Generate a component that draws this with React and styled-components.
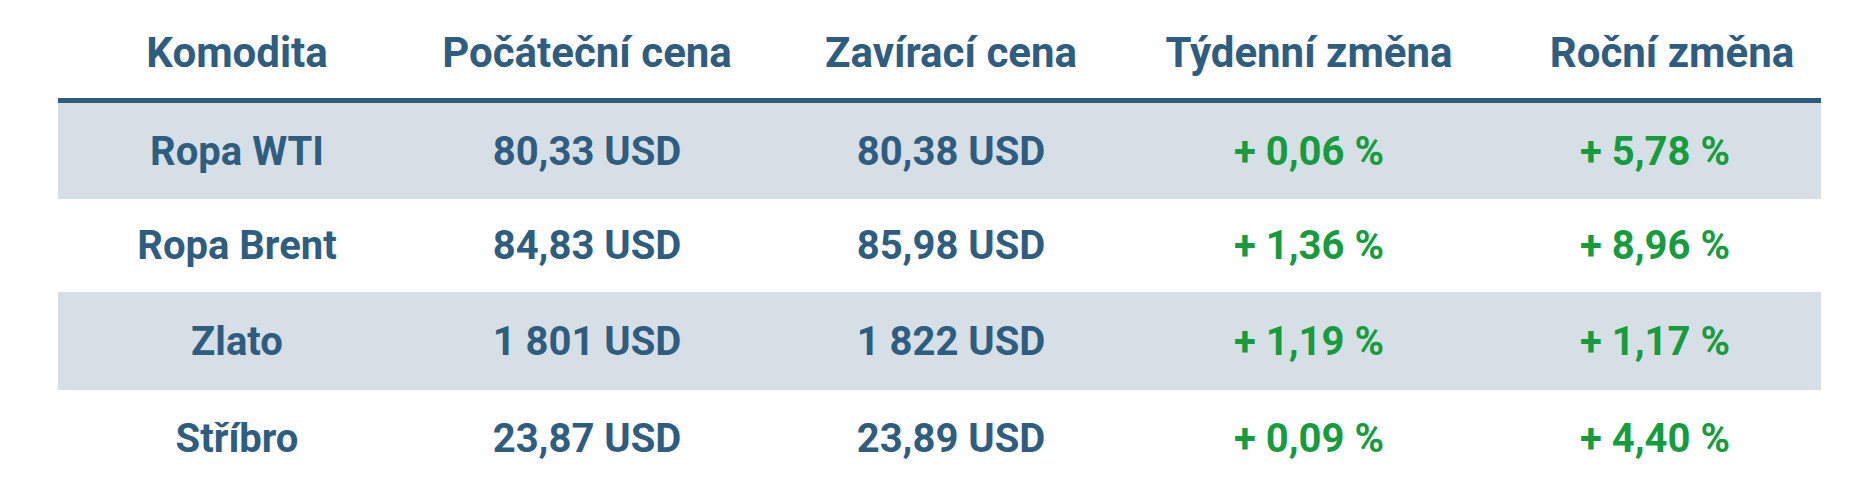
import React from "react";
import styled, { createGlobalStyle } from "styled-components";

const Global = createGlobalStyle`
  html, body { margin: 0; padding: 0; background: #ffffff; }
  body { font-family: Roboto, "Liberation Sans", sans-serif; }
`;

const Page = styled.div`
  padding-left: 58px;
  width: 1763px;
`;

const COLS = "358px 342px 386px 330px 347px";

const HeaderRow = styled.div`
  display: grid;
  grid-template-columns: ${COLS};
  height: 98px;
  border-bottom: 5px solid #2e5c7f;
`;

const HeadCell = styled.div`
  display: flex;
  align-items: flex-end;
  justify-content: center;
  padding-bottom: 21px;
  padding-left: ${(p) => p.$shift || 0}px;
  font-size: 42px;
  font-weight: 700;
  color: #2f5d80;
  white-space: nowrap;
`;

const Row = styled.div`
  display: grid;
  grid-template-columns: ${COLS};
  height: ${(p) => p.$h}px;
  background: ${(p) => (p.$striped ? "#d6dfe6" : "#ffffff")};
`;

const Cell = styled.div`
  display: flex;
  align-items: center;
  justify-content: center;
  padding-left: ${(p) => p.$shift || 0}px;
  font-size: 40px;
  font-weight: 700;
  color: ${(p) => (p.$positive ? "#179b3f" : "#2f5d80")};
  white-space: nowrap;
`;

const headers = ["Komodita", "Počáteční cena", "Zavírací cena", "Týdenní změna", "Roční změna"];
const headShift = [0, 0, 0, 0, 49];
const bodyShift = [0, 0, 0, 0, 15];

const rows = [
  { h: 96, cells: ["Ropa WTI", "80,33 USD", "80,38 USD", "+ 0,06 %", "+ 5,78 %"] },
  { h: 93, cells: ["Ropa Brent", "84,83 USD", "85,98 USD", "+ 1,36 %", "+ 8,96 %"] },
  { h: 98, cells: ["Zlato", "1 801 USD", "1 822 USD", "+ 1,19 %", "+ 1,17 %"] },
  { h: 96, cells: ["Stříbro", "23,87 USD", "23,89 USD", "+ 0,09 %", "+ 4,40 %"] },
];

export default function App() {
  return (
    <>
      <Global />
      <Page>
        <HeaderRow>
          {headers.map((h, i) => (
            <HeadCell key={h} $shift={headShift[i]}>{h}</HeadCell>
          ))}
        </HeaderRow>
        {rows.map((r, ri) => (
          <Row key={ri} $h={r.h} $striped={ri % 2 === 0}>
            {r.cells.map((c, ci) => (
              <Cell key={ci} $shift={bodyShift[ci]} $positive={ci >= 3}>
                {c}
              </Cell>
            ))}
          </Row>
        ))}
      </Page>
    </>
  );
}
